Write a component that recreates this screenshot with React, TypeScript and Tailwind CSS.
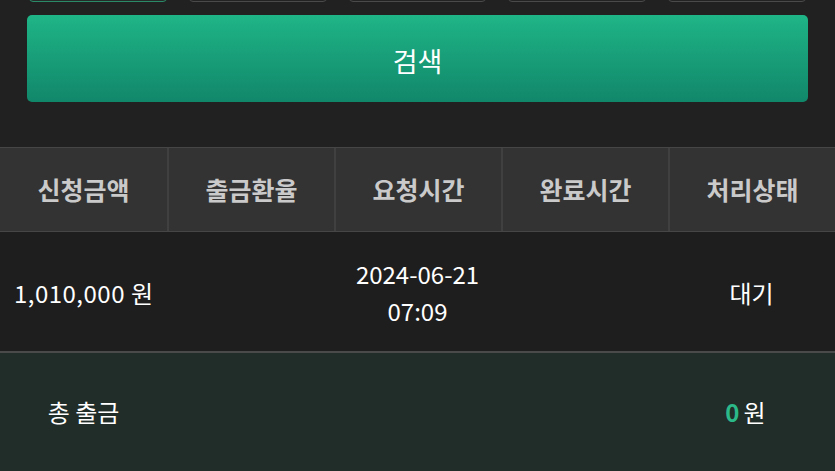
const tabs = ["", "", "", "", ""];

const headers = ["신청금액", "출금환율", "요청시간", "완료시간", "처리상태"];

export default function App() {
  return (
    <div
      className="w-[835px] h-[471px] overflow-hidden bg-[#212121] text-white"
      style={{ fontFamily: '"Noto Sans CJK KR", "Noto Sans", sans-serif' }}
    >
      <div className="px-[27px]">
        <div className="-mt-[40px] grid grid-cols-5 gap-[22px] px-[2px]">
          {tabs.map((_, i) => (
            <div
              key={i}
              className={
                "h-[42px] rounded-[4px] border " +
                (i === 0 ? "border-[#2a8a68] bg-[#262a28]" : "border-[#4a4a4a] bg-[#232323]")
              }
            />
          ))}
        </div>
        <button
          type="button"
          className="mt-[13px] flex h-[87px] w-full items-center justify-center rounded-[5px] bg-gradient-to-b from-[#1fb587] to-[#11876a] pt-[4px] text-[27px] leading-none text-white"
        >
          검색
        </button>
      </div>

      <div className="mt-[45px]">
        <div className="grid h-[85px] grid-cols-5 border-y border-[#464646] bg-[#333333]">
          {headers.map((h, i) => (
            <div
              key={h}
              className={
                "flex items-center justify-center text-[25px] font-bold text-[#cacaca] " +
                (i > 0 ? "border-l-2 border-[#404040]" : "")
              }
            >
              {h}
            </div>
          ))}
        </div>

        <div className="grid h-[121px] grid-cols-5 border-b-2 border-[#4a4a4a] bg-[#1e1e1e] text-[24px] leading-[37px]">
          <div className="flex items-center justify-center pt-[2px]">
            <span className="tracking-[0.5px]">1,010,000</span>
            <span className="ml-[6px]">원</span>
          </div>
          <div />
          <div className="flex flex-col items-center justify-center">
            <span>2024-06-21</span>
            <span>07:09</span>
          </div>
          <div />
          <div className="flex items-center justify-center pt-[2px]">대기</div>
        </div>

        <div className="grid h-[118px] grid-cols-5 bg-[#212d29] text-[24px]">
          <div className="flex items-center justify-center">총 출금</div>
          <div />
          <div />
          <div />
          <div className="flex items-center justify-center pr-[12px]">
            <span className="font-bold text-[#2bb98a]">0</span>
            <span className="ml-[4px]">원</span>
          </div>
        </div>
      </div>
    </div>
  );
}
